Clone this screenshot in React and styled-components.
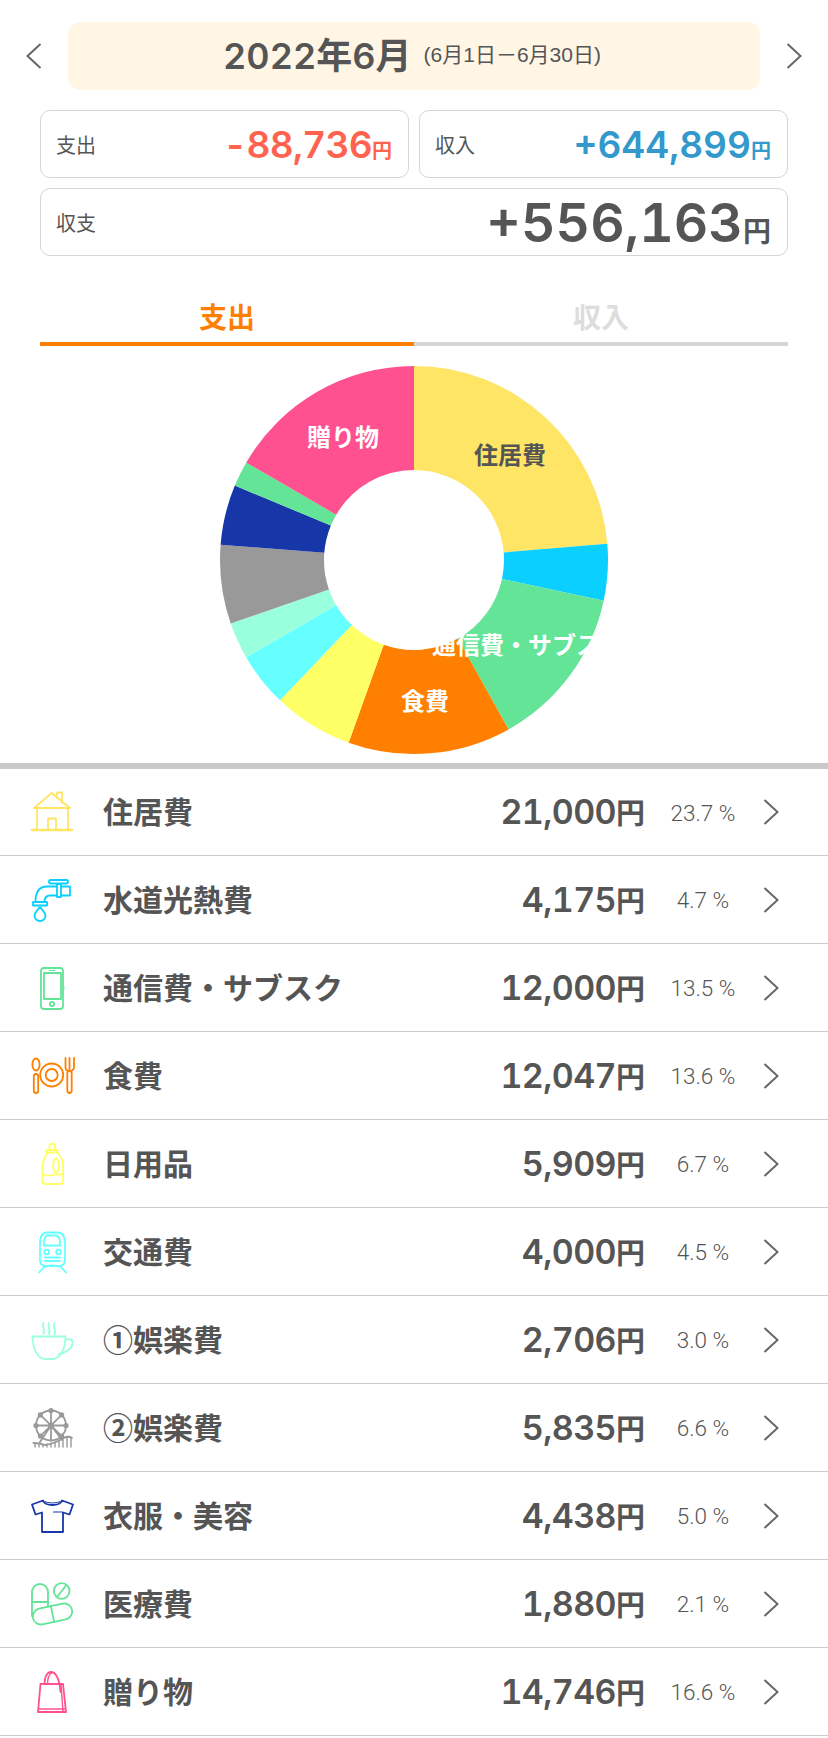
import React from "react";
import styled, { createGlobalStyle } from "styled-components";

const GlobalStyle = createGlobalStyle`
  html, body {
    margin: 0;
    padding: 0;
    background: #fff;
    color: #555;
    font-family: "Noto Sans CJK JP", sans-serif;
  }
`;

const NUM_FONT = `Inter, "Noto Sans CJK JP", sans-serif`;
const THIN_FONT = `"Liberation Sans", "Noto Sans CJK JP", sans-serif`;

const YELLOW = "#ffe566";
const BLUE = "#0bcfff";
const GREEN = "#64e497";
const ORANGE = "#ff8000";
const LEMON = "#ffff66";
const AQUA = "#66ffff";
const MINT = "#99ffdd";
const GREY = "#999999";
const NAVY = "#1737a8";
const PINK = "#ff5090";

const HouseIcon = () => (
  <>
    <path d="M14 31 L31.7 16 L50 31 Z" />
    <path d="M37 21 V15.5 H42 V26" />
    <path d="M17 31 V53 M48 31 V53" />
    <path d="M28 53 V41.5 H36 V53" />
    <path d="M12 53 H52" strokeWidth="2.4" />
  </>
);

const FaucetIcon = () => (
  <>
    <rect x="29" y="15" width="19" height="3.5" rx="1.7" />
    <path d="M37 19 H41 V32 H37 Z" />
    <path d="M37 21.5 H27 C20 21.5 15.5 26 15.5 37 M41 21.5 H50 V30.5 H41 M37 30.5 H30 C26 30.5 24.5 33 24.5 37" />
    <path d="M13 37 H27 V40.5 H13 Z" />
    <path d="M20 42 C17 46 14.5 47.5 14.5 50.5 A5.5 5.5 0 0 0 25.5 50.5 C25.5 47.5 23 46 20 42 Z" />
  </>
);

const PhoneIcon = () => (
  <>
    <rect x="21" y="15" width="22" height="41" rx="3" />
    <rect x="24" y="20" width="17" height="26" />
    <circle cx="32" cy="51" r="2.2" />
    <path d="M29.5 17.5 H35 M43.8 33 V36" strokeWidth="1.2" />
  </>
);

const DishIcon = () => (
  <>
    <ellipse cx="16" cy="23.5" rx="3.6" ry="6" />
    <rect x="13.8" y="33" width="4.4" height="19" rx="2.2" />
    <circle cx="31.7" cy="34" r="11.5" />
    <circle cx="31.7" cy="34" r="6" />
    <path d="M45.5 17 V26 Q45.5 30 49.5 30 Q54 30 54 26 V17 M49.5 17 V30" />
    <rect x="47.3" y="30" width="4.4" height="22" rx="2.2" />
  </>
);

const BottleIcon = () => (
  <>
    <path d="M29.5 21 V16.5 Q29.5 15 31 15 H33.5 Q35 15 35 16.5 V21" />
    <path d="M26.5 21 H37.5 V23.5 H26.5 Z" />
    <path d="M27.5 23.5 C25 28 22.5 32 22.5 38 V52 Q22.5 55 25.5 55 H40 Q43 55 43 52 V34 C43 30 39.5 27 37 23.5" />
    <ellipse cx="36" cy="36.5" rx="3" ry="7" />
    <path d="M22.5 45 Q27 47.5 32 46 T43 46" />
  </>
);

const TrainIcon = () => (
  <>
    <path d="M20 43 V27 C20 20 22 15.5 27 15.5 H38 C43 15.5 45 20 45 27 V43 C45 47 43 49 39 49 H26 C22 49 20 47 20 43 Z" />
    <path d="M24 27 C24 21 26 18.5 28 18.5 H36 C38 18.5 40 21 40 27 V28.5 H24 Z" />
    <circle cx="26.7" cy="35" r="2.3" />
    <circle cx="38.5" cy="35" r="2.3" />
    <path d="M25 40.5 H40 M25 44 H40" />
    <path d="M19 55.5 L24 50 Q32.5 47 41 50 L46 55.5" />
  </>
);

const CupIcon = () => (
  <>
    <path d="M12.5 31.5 H45.5 C45.5 44 40 54 33 54 H25 C18 54 12.5 44 12.5 31.5 Z" />
    <path d="M45.5 35 C50 33 53.5 35 52.5 39 C51.5 44 45 48 39 49" />
    <path d="M23.5 18 C21.5 21 25.5 25 23.5 29 M29 18 C27 21 31 25 29 29 M34.5 18 C32.5 21 36.5 25 34.5 29" />
  </>
);

const WheelIcon = () => (
  <>
    <circle cx="31" cy="32.5" r="15" />
    <path d="M31 17.5 V47.5 M16 32.5 H46 M20.4 21.9 L41.6 43.1 M41.6 21.9 L20.4 43.1" />
    <path d="M31 32.5 L20 49 M31 32.5 L42 47" />
    <g fill="#999999" stroke="none">
      <circle cx="31" cy="32.5" r="3" />
      <circle cx="31" cy="17.5" r="2.6" />
      <circle cx="16" cy="32.5" r="2.6" />
      <circle cx="46" cy="32.5" r="2.6" />
      <circle cx="20.4" cy="21.9" r="2.6" />
      <circle cx="41.6" cy="21.9" r="2.6" />
      <circle cx="20.4" cy="43.1" r="2.6" />
      <circle cx="41.6" cy="43.1" r="2.6" />
    </g>
    <path d="M13.5 50 Q20 50 25 52 Q33 51 42 46 Q48 42 52 45" />
    <path d="M15 50 V54 M19 50.5 V54 M23 51.5 V54 M27 51 V54 M31 50 V54 M35 49 V54 M39 47.5 V54 M43 45.5 V54 M47 43.5 V54 M51 44.5 V54" strokeWidth="1.4" />
  </>
);

const ShirtIcon = () => (
  <>
    <path d="M23 19.5 L12 23.5 L15.5 33.5 L22 31.5 V51 H43 V31.5 L49.5 33.5 L53 23.5 L42 19.5 C40 25.5 25 25.5 23 19.5 Z" />
    <path d="M25 20.5 C27 22.5 38 22.5 40 20.5" strokeWidth="1" />
    <path d="M33.5 31 H42" strokeWidth="1.2" />
  </>
);

const PillIcon = () => (
  <>
    <path d="M28 37 V23 A8 8 0 0 0 12 23 V47" />
    <path d="M12 33 H28" />
    <circle cx="41.7" cy="22" r="7.8" />
    <path d="M37.5 27.5 L46 16.5" />
    <g transform="translate(32.5 45) rotate(-12)">
      <rect x="-20" y="-8" width="40" height="16" rx="8" />
      <path d="M0 -8 V8" />
    </g>
  </>
);

const BagIcon = () => (
  <>
    <path d="M20.5 27 H43 L46 55 H18 Z" />
    <path d="M18.5 52 H45.5 M41 27 L43 55" strokeWidth="1.4" />
    <path d="M24.5 27 C24.5 20 27 15 31 15 C35 15 38 20 39.5 27" />
    <path d="M27.5 27 C27.5 21 29 17.5 32 15.5" strokeWidth="1.4" />
    <path d="M39.5 27 L40.5 35" />
  </>
);

const categories = [
  { name: "住居費", amount: 21000, rate: "23.7", color: YELLOW, Icon: HouseIcon },
  { name: "水道光熱費", amount: 4175, rate: "4.7", color: BLUE, Icon: FaucetIcon },
  { name: "通信費・サブスク", amount: 12000, rate: "13.5", color: GREEN, Icon: PhoneIcon },
  { name: "食費", amount: 12047, rate: "13.6", color: ORANGE, Icon: DishIcon },
  { name: "日用品", amount: 5909, rate: "6.7", color: LEMON, Icon: BottleIcon },
  { name: "交通費", amount: 4000, rate: "4.5", color: AQUA, Icon: TrainIcon },
  { name: "①娯楽費", amount: 2706, rate: "3.0", color: MINT, Icon: CupIcon },
  { name: "②娯楽費", amount: 5835, rate: "6.6", color: GREY, Icon: WheelIcon },
  { name: "衣服・美容", amount: 4438, rate: "5.0", color: NAVY, Icon: ShirtIcon },
  { name: "医療費", amount: 1880, rate: "2.1", color: GREEN, Icon: PillIcon },
  { name: "贈り物", amount: 14746, rate: "16.6", color: PINK, Icon: BagIcon },
];

const pieLabels = [
  { text: "住居費", x: 96, y: 90, dark: true },
  { text: "通信費・サブスク", x: 114, y: 280 },
  { text: "食費", x: 11, y: 336 },
  { text: "贈り物", x: -71, y: 72 },
];

const point = (r, turn) => {
  const a = turn * Math.PI * 2;
  return `${(Math.sin(a) * r).toFixed(2)} ${(-Math.cos(a) * r).toFixed(2)}`;
};

function Donut() {
  const total = categories.reduce((sum, c) => sum + c.amount, 0);
  let from = 0;

  return (
    <PieChart viewBox="-194 -194 388 388">
      {categories.map((c) => {
        const to = from + c.amount / total;
        const big = to - from > 0.5 ? 1 : 0;
        const d = `M${point(194, from)} A194 194 0 ${big} 1 ${point(194, to)} L${point(90, to)} A90 90 0 ${big} 0 ${point(90, from)} Z`;
        from = to;
        return <path key={c.name} d={d} fill={c.color} />;
      })}
      {pieLabels.map((l) => (
        <PieLabel
          key={l.text}
          x={l.x}
          y={l.y - 194 + 8}
          fill={l.dark ? "#555" : "#fff"}
          textAnchor="middle"
        >
          {l.text}
        </PieLabel>
      ))}
    </PieChart>
  );
}

function Chevron({ left }) {
  return (
    <ChevronSvg viewBox="0 0 16 26" $left={left}>
      <path d="M1.5 1 L14.5 13 L1.5 25" />
    </ChevronSvg>
  );
}

function Row({ item }) {
  const { Icon } = item;
  return (
    <RowWrap>
      <IconSvg viewBox="0 0 70 70" $color={item.color}>
        <Icon />
      </IconSvg>
      <RowName>{item.name}</RowName>
      <RowAmount>
        {item.amount.toLocaleString("en-US")}
        <Yen $size={29}>円</Yen>
      </RowAmount>
      <RowRate>{item.rate} %</RowRate>
      <Chevron />
    </RowWrap>
  );
}

export default function App() {
  return (
    <Page>
      <GlobalStyle />
      <MonthBar>
        <ArrowCell>
          <Chevron left />
        </ArrowCell>
        <MonthBand>
          <MonthTitle>2022年6月</MonthTitle>
          <MonthRange>(6月1日－6月30日)</MonthRange>
        </MonthBand>
        <ArrowCell>
          <Chevron />
        </ArrowCell>
      </MonthBar>

      <Summary>
        <Card>
          <CardLabel>支出</CardLabel>
          <CardValue $color="#ff6350" $tight>
            -88,736<Yen $size={20}>円</Yen>
          </CardValue>
        </Card>
        <Card>
          <CardLabel>収入</CardLabel>
          <CardValue $color="#3399cc">
            +644,899<Yen $size={20}>円</Yen>
          </CardValue>
        </Card>
        <Card $wide>
          <CardLabel>収支</CardLabel>
          <CardValue $large>
            +556,163<Yen $size={28}>円</Yen>
          </CardValue>
        </Card>
      </Summary>

      <Tabs>
        <Tab $active>支出</Tab>
        <Tab>収入</Tab>
      </Tabs>

      <Donut />

      <Divider />
      <List>
        {categories.map((item) => (
          <Row key={item.name} item={item} />
        ))}
      </List>
    </Page>
  );
}

const Page = styled.div`
  width: 828px;
  height: 1738px;
  overflow: hidden;
  background: #fff;
`;

const MonthBar = styled.div`
  display: flex;
  align-items: stretch;
  height: 68px;
  padding-top: 22px;
`;

const ArrowCell = styled.div`
  width: 68px;
  display: flex;
  align-items: center;
  justify-content: center;
`;

const ChevronSvg = styled.svg`
  width: 16px;
  height: 26px;
  flex: none;
  transform: ${(props) => (props.$left ? "scaleX(-1)" : "none")};
  path {
    fill: none;
    stroke: #666;
    stroke-width: 2;
  }
`;

const MonthBand = styled.div`
  flex: 1;
  display: flex;
  align-items: center;
  justify-content: center;
  gap: 12px;
  padding: 0 4px 6px 0;
  background: #fff6e5;
  border-radius: 12px;
`;

const MonthTitle = styled.span`
  font-family: ${NUM_FONT};
  font-size: 36px;
  font-weight: 600;
  font-variant-numeric: tabular-nums;
  color: #555;
`;

const MonthRange = styled.span`
  font-family: ${THIN_FONT};
  font-size: 21px;
  font-weight: 400;
  color: #555;
`;

const Summary = styled.div`
  display: grid;
  grid-template-columns: 369px 369px;
  column-gap: 10px;
  row-gap: 10px;
  margin: 20px 40px 0;
`;

const Card = styled.div`
  box-sizing: border-box;
  grid-column: ${(props) => (props.$wide ? "1 / 3" : "auto")};
  height: 68px;
  display: flex;
  align-items: center;
  justify-content: space-between;
  padding: 0 16px 0 15px;
  border: 1px solid #d5d5d5;
  border-radius: 10px;
`;

const CardLabel = styled.span`
  font-size: 20px;
  font-weight: 400;
  color: #555;
`;

const CardValue = styled.span`
  font-family: ${NUM_FONT};
  font-size: ${(props) => (props.$large ? "53.5px" : "37px")};
  font-weight: 600;
  letter-spacing: ${(props) => (props.$tight ? "-0.7px" : "0")};
  font-variant-numeric: tabular-nums;
  color: ${(props) => props.$color || "#555"};
  white-space: nowrap;
`;

const Yen = styled.span`
  font-family: "Noto Sans CJK JP", sans-serif;
  font-size: ${(props) => props.$size}px;
  font-weight: 700;
  letter-spacing: 0;
`;

const Tabs = styled.div`
  display: flex;
  margin: 0 40px;
  padding-top: 34px;
`;

const Tab = styled.div`
  flex: 1;
  height: 52px;
  line-height: 52px;
  text-align: center;
  font-size: 28px;
  font-weight: 700;
  color: ${(props) => (props.$active ? "#ff8000" : "#ddd")};
  border-bottom: 4px solid ${(props) => (props.$active ? "#ff8000" : "#d5d5d5")};
`;

const PieChart = styled.svg`
  display: block;
  width: 388px;
  height: 388px;
  margin: 20px auto 0;
  overflow: visible;
`;

const PieLabel = styled.text`
  font-family: "Noto Sans CJK JP", sans-serif;
  font-size: 24px;
  font-weight: 700;
`;

const Divider = styled.div`
  height: 6px;
  margin-top: 9px;
  background: #c8c8c8;
`;

const List = styled.div`
  display: flex;
  flex-direction: column;
`;

const RowWrap = styled.div`
  box-sizing: border-box;
  height: 88px;
  display: flex;
  align-items: center;
  padding: 0 49px 0 20px;
  border-bottom: 1px solid #ccc;
  &:first-child {
    height: 87px;
  }
`;

const IconSvg = styled.svg`
  width: 70px;
  height: 70px;
  flex: none;
  fill: none;
  stroke: ${(props) => props.$color};
  stroke-width: 1.8;
  stroke-linejoin: round;
  stroke-linecap: round;
`;

const RowName = styled.span`
  flex: 1;
  margin-left: 13px;
  padding-bottom: 4px;
  font-size: 30px;
  font-weight: 700;
  color: #555;
`;

const RowAmount = styled.span`
  font-family: ${NUM_FONT};
  font-size: 34px;
  font-weight: 600;
  font-variant-numeric: tabular-nums;
  letter-spacing: -0.6px;
  color: #555;
  margin-right: -2px;
  padding-bottom: 2px;
`;

const RowRate = styled.span`
  width: 80px;
  margin: 0 20px;
  padding-top: 1px;
  text-align: center;
  font-family: Roboto, "Noto Sans CJK JP", sans-serif;
  font-size: 22.5px;
  font-weight: 300;
  color: #555;
`;
